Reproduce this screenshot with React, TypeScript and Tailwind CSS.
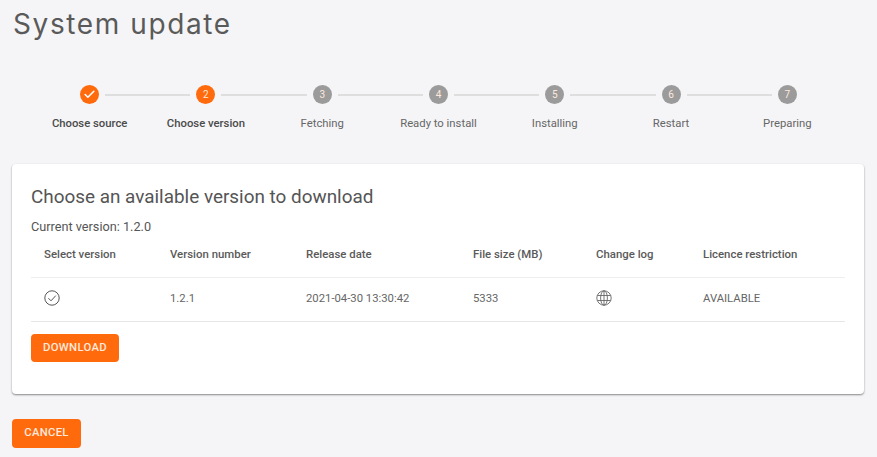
import React from "react";
import { Check } from "lucide-react";

const steps = ["Choose source", "Choose version", "Fetching", "Ready to install", "Installing", "Restart", "Preparing"];

const columns = [
  { label: "Select version", width: "w-[126px]" },
  { label: "Version number", width: "w-[136px]" },
  { label: "Release date", width: "w-[167px]" },
  { label: "File size (MB)", width: "w-[123px]" },
  { label: "Change log", width: "w-[107px]" },
  { label: "Licence restriction", width: "flex-1" },
];

const Step: React.FC<{ label: string; index: number }> = ({ label, index }) => {
  const active = index < 2;
  return (
    <div className="flex-1 flex flex-col items-center">
      <div className="w-full flex items-center">
        <span className={`flex-1 h-0.5 mr-1.5 ${index === 0 ? "" : "bg-[#dedede]"}`} />
        <span className={`w-[19px] h-[19px] rounded-full flex items-center justify-center text-[10px] text-[#ffe9dc] ${active ? "bg-[#ff6a0d]" : "bg-[#9b9b9b]"}`}>
          {index === 0 ? <Check size={13} strokeWidth={3} className="text-white" /> : index + 1}
        </span>
        <span className={`flex-1 h-0.5 ml-1.5 ${index === steps.length - 1 ? "" : "bg-[#dedede]"}`} />
      </div>
      <span className={`mt-[12px] text-[11.3px] leading-[16px] ${active ? "font-medium text-[#4a4a4a]" : "text-[#666666]"}`}>{label}</span>
    </div>
  );
};

const OutlineCheck = () => (
  <svg className="block mb-[3px]" width="16" height="16" viewBox="0 0 16 16" fill="none" stroke="#555555" strokeWidth="1">
    <circle cx="8" cy="8" r="7.2" />
    <path d="M4.4 8.2 L7 10.8 L11.8 5.6" />
  </svg>
);

const Globe = () => (
  <svg className="block mb-[3px]" width="16" height="16" viewBox="0 0 16 16" fill="none" stroke="#666666" strokeWidth="0.9">
    <circle cx="8" cy="8" r="7.2" />
    <ellipse cx="8" cy="8" rx="3.4" ry="7.2" />
    <path d="M8 0.8 V15.2 M1.4 5.5 H14.6 M1.4 10.5 H14.6" />
  </svg>
);

export default function App() {
  return (
    <div className="min-h-[457px] bg-[#f5f5f7] pl-3 pr-[13px] overflow-hidden font-['Roboto',sans-serif]">
      <h1 className="pl-px pt-[5px] h-[85px] text-[28px] leading-[38px] tracking-[1.6px] text-[#5a5a5a] font-['Inter',sans-serif]">System update</h1>

      <div className="flex pl-[19.5px] pr-[18.5px] h-[79px]">
        {steps.map((s, i) => (
          <Step key={s} label={s} index={i} />
        ))}
      </div>

      <div className="h-[230px] bg-white rounded shadow-[0_1px_2px_rgba(0,0,0,0.45)] px-[19px] pt-[20px]">
        <h2 className="text-[18.9px] leading-[26px] text-[#555555]">Choose an available version to download</h2>
        <p className="mt-[7px] text-[12.7px] leading-[20px] text-[#555555]">Current version: 1.2.0</p>

        <div className="flex items-center h-[41px] pl-[13px] border-b border-[#eeeeee] text-[11.4px] font-medium text-[#5a5a5a] pb-1">
          {columns.map((c) => (
            <span key={c.label} className={c.width}>{c.label}</span>
          ))}
        </div>
        <div className="flex items-center h-[44px] pl-[13px] border-b border-[#e6e6e6] text-[11.3px] text-[#666666]">
          <span className={columns[0].width}><OutlineCheck /></span>
          <span className={columns[1].width}>1.2.1</span>
          <span className={columns[2].width}>2021-04-30 13:30:42</span>
          <span className={columns[3].width}>5333</span>
          <span className={columns[4].width}><Globe /></span>
          <span className={columns[5].width}>AVAILABLE</span>
        </div>

        <button className="block mt-3 w-[88px] h-[28px] rounded bg-[#ff6a0d] text-[11.3px] font-medium tracking-[0.3px] text-[#ffe9dc]">DOWNLOAD</button>
      </div>

      <button className="block mt-[25px] w-[69px] h-[29px] rounded bg-[#ff6a0d] text-[11.3px] font-medium tracking-[0.3px] text-[#ffe9dc]">CANCEL</button>
    </div>
  );
}
